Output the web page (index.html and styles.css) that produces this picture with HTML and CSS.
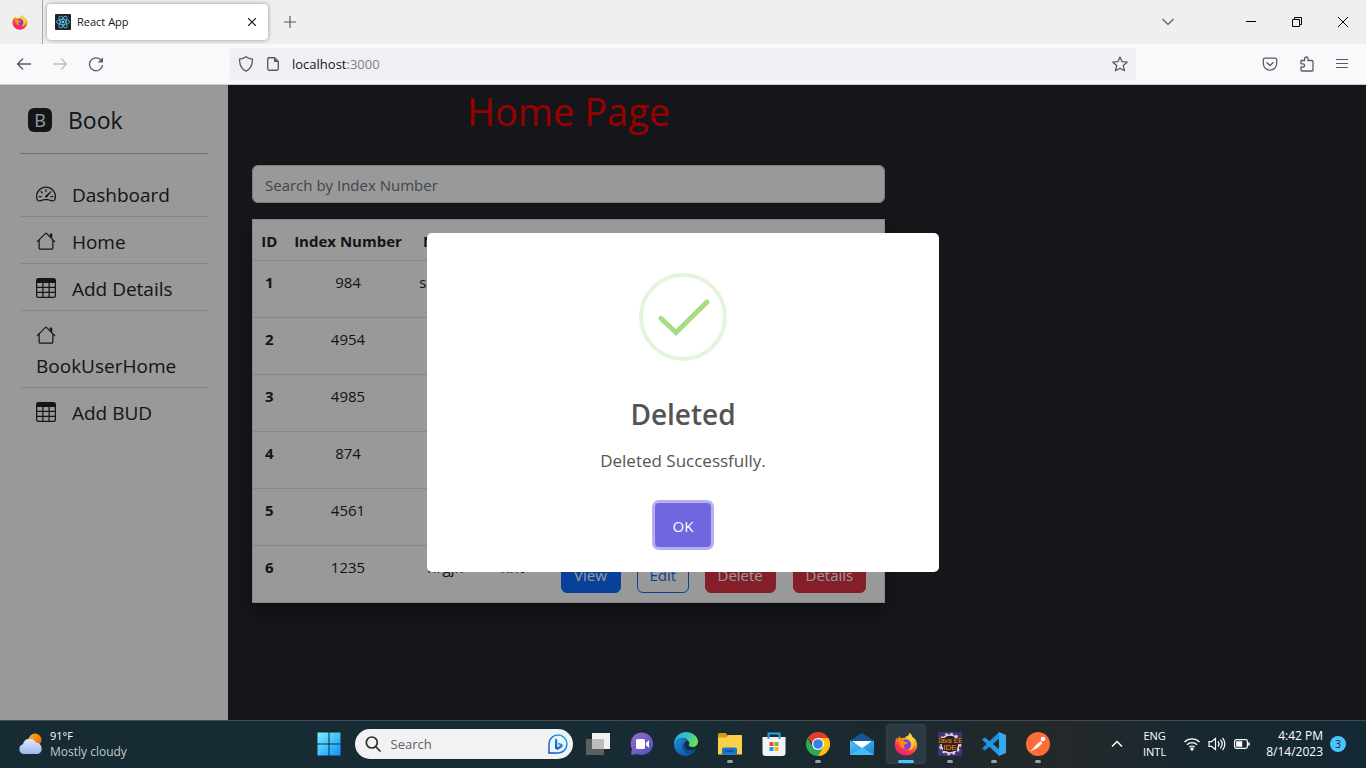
FILE: index.html
```html
<!DOCTYPE html>
<html lang="en">
<head>
<meta charset="utf-8">
<meta name="viewport" content="width=device-width, initial-scale=1">
<title>React App</title>
<link rel="stylesheet" href="styles.css">
</head>
<body>
<svg class="defs" aria-hidden="true">
  <defs>
    <linearGradient id="ff-a" x1=".8" y1="0" x2=".3" y2="1"><stop offset="0" stop-color="#fff14f"/><stop offset=".4" stop-color="#ff980e"/><stop offset=".7" stop-color="#ff3647"/><stop offset="1" stop-color="#f0188a"/></linearGradient>
    <linearGradient id="win" x1="0" y1="0" x2="1" y2="1"><stop offset="0" stop-color="#7cf0ff"/><stop offset="1" stop-color="#0a94fb"/></linearGradient>
    <linearGradient id="sun" x1="0" y1="0" x2="1" y2="1"><stop offset="0" stop-color="#fcb91c"/><stop offset="1" stop-color="#ea5a0c"/></linearGradient>
    <linearGradient id="cloud" x1="0" y1="0" x2="0" y2="1"><stop offset="0" stop-color="#dfe9fc"/><stop offset="1" stop-color="#9db9ee"/></linearGradient>
    <linearGradient id="bing" x1="0" y1="1" x2="1" y2="0"><stop offset="0" stop-color="#1b48c8"/><stop offset="1" stop-color="#28b4ea"/></linearGradient>
    <linearGradient id="chat" x1="0" y1="0" x2="1" y2="1"><stop offset="0" stop-color="#9a6cc4"/><stop offset="1" stop-color="#4c52c6"/></linearGradient>
    <linearGradient id="edge-a" x1="0" y1=".2" x2="1" y2=".4"><stop offset="0" stop-color="#2aa9e6"/><stop offset=".6" stop-color="#36c5b6"/><stop offset="1" stop-color="#6fe04e"/></linearGradient>
    <linearGradient id="edge-b" x1="0" y1="0" x2="1" y2="1"><stop offset="0" stop-color="#1b8edb"/><stop offset="1" stop-color="#0b4a96"/></linearGradient>
    <linearGradient id="mail" x1="0" y1="0" x2="1" y2="1"><stop offset="0" stop-color="#4fc8f8"/><stop offset="1" stop-color="#1684dc"/></linearGradient>
    <symbol id="i-firefox" viewBox="0 0 24 24">
      <path fill="url(#ff-a)" d="M15.500 .8c1.300 1 2.300 2.400 2.800 3.900 3 1.700 5 4.900 4.900 8.600C23 19 18 23.500 12 23.500S.8 18.900.8 12.700c0-3 .8-5.500 2.400-7.500l.5 2 1.800-2.900 1.400 2.200c1.200-.6 2.300-.8 3.500-.6L12.800 3.900 14.500 3.500z"/>
      <circle cx="12" cy="12.500" r="5" fill="#7542e5"/>
      <path fill="#ff8a16" d="M4.500 7.500c3 .2 4.800.9 6 2.200l3.300.6c-.5 1.700-2.200 1.900-3.600 2.600-.8.500-.4 2.300 1.500 3.200-3.800 1.400-7-1.100-7.200-8.600z"/>
      <path fill="#ffd43b" d="M14.800 3.500c3.300 1.700 5.600 4.800 5.400 9-.8 4-3.500 5.700-6.400 6 3-2 4.200-4.500 3.400-7.800C16.400 8.500 14.500 7 13 5.900z"/>
    </symbol>
    <symbol id="i-house" viewBox="0 0 16 16" fill="currentColor">
      <path d="M2 13.500V7h1v6.500a.5.5 0 0 0 .5.5h9a.5.5 0 0 0 .5-.5V7h1v6.500a1.500 1.500 0 0 1-1.500 1.500h-9A1.500 1.500 0 0 1 2 13.500zm11-11V6l-2-2V2.500a.5.5 0 0 1 .5-.5h1a.5.5 0 0 1 .5.500z"/>
      <path d="M7.293 1.500a1 1 0 0 1 1.414 0l6.647 6.646a.5.5 0 0 1-.708.708L8 2.207 1.354 8.854a.5.5 0 1 1-.708-.708z"/>
    </symbol>
    <symbol id="i-table" viewBox="0 0 16 16" fill="currentColor">
      <path d="M0 2a2 2 0 0 1 2-2h12a2 2 0 0 1 2 2v12a2 2 0 0 1-2 2H2a2 2 0 0 1-2-2V2zm15 2h-4v3h4V4zm0 4h-4v3h4V8zm0 4h-4v3h3a1 1 0 0 0 1-1v-2zm-5 3v-3H6v3h4zm-5 0v-3H1v2a1 1 0 0 0 1 1h3zm-4-4h4V8H1v3zm0-4h4V4H1v3zm5-3v3h4V4H6zm4 4H6v3h4V8z"/>
    </symbol>
    <symbol id="i-speed" viewBox="0 0 16 16" fill="currentColor">
      <path d="M8 4a.5.5 0 0 1 .5.5V6a.5.5 0 0 1-1 0V4.500A.5.5 0 0 1 8 4zM3.732 5.732a.5.5 0 0 1 .707 0l.915.914a.5.5 0 1 1-.708.708l-.914-.915a.5.5 0 0 1 0-.707zM2 10a.5.5 0 0 1 .5-.5h1.586a.5.5 0 0 1 0 1H2.500A.5.5 0 0 1 2 10zm9.500 0a.5.5 0 0 1 .5-.5h1.500a.5.5 0 0 1 0 1H12a.5.5 0 0 1-.5-.5zm.754-4.246a.389.389 0 0 0-.527-.02L7.547 9.310a.91.91 0 1 0 1.302 1.258l3.434-4.297a.389.389 0 0 0-.029-.518z"/>
      <path fill-rule="evenodd" d="M0 10a8 8 0 1 1 15.547 2.661c-.442 1.253-1.845 1.602-2.932 1.250C11.309 13.488 9.475 13 8 13c-1.474 0-3.310.488-4.615.911-1.087.352-2.490.003-2.932-1.250A7.988 7.988 0 0 1 0 10zm8-7a7 7 0 0 0-6.603 9.329c.203.575.923.876 1.680.630C4.397 12.533 6.358 12 8 12s3.604.532 4.923.960c.757.245 1.477-.056 1.680-.631A7 7 0 0 0 8 3z"/>
    </symbol>
  </defs>
</svg>

<header class="tabs">
  <button class="pinned" aria-label="Firefox View"><svg width="16" height="16"><use href="#i-firefox"/></svg></button>
  <div class="tab">
    <svg width="16" height="16" viewBox="0 0 16 16"><rect width="16" height="16" rx="1" fill="#20232a"/><g fill="none" stroke="#53b9d6" stroke-width=".9"><ellipse cx="8" cy="8" rx="6.500" ry="2.600"/><ellipse cx="8" cy="8" rx="6.500" ry="2.600" transform="rotate(60 8 8)"/><ellipse cx="8" cy="8" rx="6.500" ry="2.600" transform="rotate(120 8 8)"/></g><circle cx="8" cy="8" r="1.300" fill="#61dafb"/></svg>
    <span class="tab-title">React App</span>
    <button class="tab-close" aria-label="Close tab"><svg width="8" height="8" viewBox="0 0 8 8"><path d="M0 0l8 8M8 0L0 8" stroke="#15141a" stroke-width="1.200"/></svg></button>
  </div>
  <button class="new-tab" aria-label="New tab"><svg width="12" height="12" viewBox="0 0 12 12"><path d="M6 0v12M0 6h12" stroke="#5b5b66" stroke-width="1.200"/></svg></button>
  <div class="window-buttons">
    <button class="list-tabs" aria-label="List all tabs"><svg width="12" height="8" viewBox="0 0 12 8"><path d="M.5 1L6 6.500 11.500 1" fill="none" stroke="#5b5b66" stroke-width="1.200"/></svg></button>
    <button aria-label="Minimize"><svg width="10" height="10" viewBox="0 0 10 10"><path d="M0 4.500h10" stroke="#000"/></svg></button>
    <button aria-label="Restore"><svg width="10" height="10" viewBox="0 0 10 10" fill="none" stroke="#000"><path d="M.5 2.500h7v7h-7zM2.500 2.500v-2h7v7h-2"/></svg></button>
    <button aria-label="Close"><svg width="10" height="10" viewBox="0 0 10 10"><path d="M0 0l10 10M10 0L0 10" stroke="#000"/></svg></button>
  </div>
</header>

<nav class="toolbar" aria-label="Browser toolbar">
  <div class="history">
    <button aria-label="Back"><svg width="16" height="16" viewBox="0 0 16 16" fill="none" stroke="#5b5b66" stroke-width="1.300"><path d="M7 2.500L1.500 8 7 13.500M1.500 8H15"/></svg></button>
    <button aria-label="Forward" disabled><svg width="16" height="16" viewBox="0 0 16 16" fill="none" stroke="#bdbdc2" stroke-width="1.300"><path d="M9 2.500L14.500 8 9 13.500M14.500 8H1"/></svg></button>
    <button aria-label="Reload"><svg width="16" height="16" viewBox="0 0 16 16" fill="none" stroke="#5b5b66" stroke-width="1.300"><path d="M12.700 3.800A6.500 6.500 0 1 0 14.500 9"/><path d="M15 1.200v5.300H9.700z" fill="#5b5b66" stroke="none"/></svg></button>
  </div>
  <div class="urlbar">
    <svg width="16" height="16" viewBox="0 0 16 16" fill="none" stroke="#5b5b66" stroke-width="1.300"><path d="M8 .8c2 1.500 4.300 2.200 6.500 2.400 0 5.300-1.500 9.800-6.500 12-5-2.200-6.500-6.700-6.500-12C3.700 3 6 2.300 8 .8z"/></svg>
    <svg width="16" height="16" viewBox="0 0 16 16" fill="none" stroke="#5b5b66" stroke-width="1.400"><path d="M9.500 1.700H4A1.500 1.500 0 0 0 2.700 3v10A1.500 1.500 0 0 0 4 14.300h8a1.500 1.500 0 0 0 1.300-1.300V5.500z"/><path d="M9 1.500v4.500h4.500z" fill="#5b5b66" stroke="none"/></svg>
    <div class="url" role="textbox" contenteditable="true" spellcheck="false" aria-label="Address">localhost<span class="port">:3000</span></div>
    <button aria-label="Bookmark this page"><svg width="16" height="16" viewBox="0 0 16 16" fill="none" stroke="#5b5b66" stroke-width="1.300" stroke-linejoin="round"><path d="M8 1l2.100 4.700 5.100.5-3.900 3.400 1.200 5.200L8 12.200l-4.500 2.600 1.200-5.200L.8 6.200l5.100-.5z"/></svg></button>
  </div>
  <div class="actions">
    <button aria-label="Save to Pocket"><svg width="16" height="16" viewBox="0 0 16 16" fill="none" stroke="#5b5b66" stroke-width="1.300"><path d="M3 2.200h10a1.700 1.700 0 0 1 1.700 1.700v3.600a6.700 6.700 0 0 1-13.400 0V3.900A1.700 1.700 0 0 1 3 2.200z"/><path d="M4.500 6.200L8 9.500l3.500-3.300"/></svg></button>
    <button aria-label="Extensions"><svg width="16" height="16" viewBox="0 0 16 16" fill="none" stroke="#5b5b66" stroke-width="1.300" stroke-linejoin="round"><path d="M2 4.500h3.600V2.700a1.700 1.700 0 0 1 3.400 0v1.800h4a1 1 0 0 1 1 1V14a1 1 0 0 1-1 1H3a1 1 0 0 1-1-1v-3h2a1.600 1.600 0 0 0 0-3.200H2z"/></svg></button>
    <button aria-label="Open application menu"><svg width="12" height="12" viewBox="0 0 12 12"><path d="M0 1.500h12M0 5.500h12M0 9.500h12" stroke="#5b5b66"/></svg></button>
  </div>
</nav>

<div class="page">
  <aside class="sidebar">
    <a class="brand" href="#"><span class="brand-mark" aria-hidden="true">B</span><span>Book</span></a>
    <hr class="rule">
    <ul class="menu">
      <li><a href="#"><svg class="menu-icon"><use href="#i-speed"/></svg> Dashboard</a></li>
      <li><a href="#"><svg class="menu-icon"><use href="#i-house"/></svg> Home</a></li>
      <li><a href="#"><svg class="menu-icon"><use href="#i-table"/></svg> Add Details</a></li>
      <li><a href="#"><svg class="menu-icon"><use href="#i-house"/></svg> BookUserHome</a></li>
      <li><a href="#"><svg class="menu-icon"><use href="#i-table"/></svg> Add BUD</a></li>
    </ul>
  </aside>

  <main class="content">
    <h1 class="page-title">Home Page</h1>
    <input class="search" type="text" placeholder="Search by Index Number" aria-label="Search by Index Number">
    <table class="records">
      <colgroup><col class="c-id"><col class="c-index"><col class="c-name"><col class="c-short"><col class="c-view"><col class="c-edit"><col class="c-delete"><col></colgroup>
      <thead><tr><th>ID</th><th>Index Number</th><th>Name</th><th></th><th></th><th></th><th></th><th></th></tr></thead>
      <tbody>
        <tr><th>1</th><td>984</td><td>sandun</td><td></td><td></td><td></td><td></td><td></td></tr>
        <tr><th>2</th><td>4954</td><td></td><td></td><td></td><td></td><td></td><td></td></tr>
        <tr><th>3</th><td>4985</td><td></td><td></td><td></td><td></td><td></td><td></td></tr>
        <tr><th>4</th><td>874</td><td></td><td></td><td></td><td></td><td></td><td></td></tr>
        <tr><th>5</th><td>4561</td><td></td><td></td><td></td><td></td><td></td><td></td></tr>
        <tr><th>6</th><td>1235</td><td>hrgjn</td><td>hnt</td><td><button class="btn view">View</button></td><td><button class="btn edit">Edit</button></td><td><button class="btn danger">Delete</button></td><td><button class="btn danger">Details</button></td></tr>
      </tbody>
    </table>
  </main>

  <div class="backdrop">
    <div class="modal" role="dialog" aria-modal="true" aria-labelledby="modal-title">
      <svg class="modal-icon" width="88" height="88" viewBox="0 0 88 88" fill="none"><circle cx="44" cy="44" r="42" stroke="#e4f5db" stroke-width="4"/><path d="M22 45.500L37 59.500 68 29" stroke="#a5dc86" stroke-width="5" stroke-linecap="round"/></svg>
      <h2 class="modal-title" id="modal-title">Deleted</h2>
      <p class="modal-text">Deleted Successfully.</p>
      <button class="ok">OK</button>
    </div>
  </div>
</div>

<footer class="taskbar">
  <button class="weather">
    <svg width="26" height="22" viewBox="0 0 26 22"><circle cx="17" cy="7" r="6.500" fill="url(#sun)"/><path d="M5.500 21a5 5 0 0 1-.6-9.700A7 7 0 0 1 18 9.500a6 6 0 0 1 2 11.500z" fill="url(#cloud)"/></svg>
    <span class="weather-text"><span class="degrees">91°F</span><span class="sky">Mostly cloudy</span></span>
  </button>

  <div class="apps">
    <button class="app" aria-label="Start"><svg width="24" height="24" viewBox="0 0 24 24"><path fill="url(#win)" d="M.5.5h11v11H.500zM12.500.5h11v11h-11zM.5 12.500h11v11H.500zM12.500 12.500h11v11h-11z"/></svg></button>
    <label class="task-search">
      <svg width="16" height="16" viewBox="0 0 16 16" fill="none" stroke="#2b2b2b" stroke-width="1.700" stroke-linecap="round"><circle cx="6.800" cy="6.500" r="5.500"/><path d="M11 11l4 4"/></svg>
      <input type="text" placeholder="Search" aria-label="Search">
      <svg width="20" height="20" viewBox="0 0 20 20"><path d="M1 19V10a9 9 0 1 1 9 9z" fill="#eaf6fd" stroke="url(#bing)" stroke-width="1.500"/><path d="M7 4.500l2.300.9v7.800l3-1.700-1.500-.8-.9-2.300 4.700 1.800v2.700l-5.300 3.100L7 14.500z" fill="url(#bing)"/></svg>
    </label>
    <button class="app" aria-label="Task view"><svg width="24" height="24" viewBox="0 0 24 24"><path d="M6 1h18v16H6z" fill="#f1f1f1"/><path d="M0 7h18v16H0z" fill="#5e5e5e"/><path d="M6 7h12v10H6z" fill="#bdbdbd"/></svg></button>
    <button class="app" aria-label="Chat"><svg width="24" height="24" viewBox="0 0 24 24"><path d="M1 23l1-6A11.200 11.200 0 1 1 7.500 22z" fill="url(#chat)"/><rect x="6" y="7" width="9" height="10" rx="1.500" fill="#fff"/><path d="M16 11l3-3v8l-3-3z" fill="#fff"/></svg></button>
    <button class="app" aria-label="Edge"><svg width="24" height="24" viewBox="0 0 24 24"><path fill="url(#edge-b)" d="M0 12C.5 5 9 4 13 9c-3 1-3.500 4-2 6.500 2 3.500 7 3.500 11 1.500-2 4-6 7-10.500 7C5 24 0 18.500 0 12z"/><path fill="#0c4e94" d="M8.500 13c-1 5 3.500 9 8 8.800 3-1.300 4.500-3 5.500-4.800-5 2.500-10 1.500-11.500-2.500-.6-1.500-.5-3 .5-4.500-1.300.5-2.200 1.500-2.500 3z"/><path fill="url(#edge-a)" d="M0 12C0 5 5.500 0 12 0s12 4.500 12 9.500c0 3.500-2.500 5.500-5.500 5.500-2.500 0-4-1-3.700-2 .8-1 .7-2.500-.2-3.700C12.500 6.500 9.500 5.500 6.500 6 3.500 6.500 1 8.500 0 12z"/></svg></button>
    <button class="app running" aria-label="File Explorer"><svg width="24" height="24" viewBox="0 0 24 24"><path d="M0 2.500A1.500 1.500 0 0 1 1.500 1h6l2.500 2.500V9H0z" fill="#d99a10"/><path d="M0 5.500h8.500L10.500 3H23a1 1 0 0 1 1 1v18.500H0z" fill="#fccf49"/><path d="M4 22.500v-5A2 2 0 0 1 6 15.500h11a2 2 0 0 1 2 2v5z" fill="#1677d0"/><path d="M7 19h9" stroke="#0b4d91" stroke-width="1.500"/></svg></button>
    <button class="app" aria-label="Microsoft Store"><svg width="24" height="24" viewBox="0 0 24 24"><path d="M.5 5h23v16a3 3 0 0 1-3 3h-17a3 3 0 0 1-3-3z" fill="#f4f4f4"/><path d="M6.500 7V1.500h11V7" fill="none" stroke="#24a9e2" stroke-width="2"/><path d="M7.500 10h4v4h-4z" fill="#e8502a"/><path d="M12.500 10h4v4h-4z" fill="#7db72f"/><path d="M7.500 15h4v4h-4z" fill="#1c9be6"/><path d="M12.500 15h4v4h-4z" fill="#f8b51d"/></svg></button>
    <button class="app running" aria-label="Chrome"><svg width="24" height="24" viewBox="0 0 24 24"><path fill="#e33b2e" d="M1.600 6A12 12 0 0 1 22.400 6H12v12z"/><path fill="#2da94f" d="M1.600 6A12 12 0 0 0 12 24l5.200-9L12 12 6.800 15z"/><path fill="#fdc40e" d="M22.400 6A12 12 0 0 1 12 24l5.200-9L12 6z"/><circle cx="12" cy="12" r="6" fill="#fff"/><circle cx="12" cy="12" r="4.800" fill="#3b7ded"/></svg></button>
    <button class="app" aria-label="Mail"><svg width="24" height="24" viewBox="0 0 24 24"><path d="M0 8.500L12 1l12 7.500v5H0z" fill="#0f5796"/><path d="M2 9h20l-10 8z" fill="#fff"/><path d="M0 8.500L12 16l12-7.500V23H0z" fill="url(#mail)"/><path d="M0 23l12-7.500L24 23z" fill="#45bdf3"/></svg></button>
    <button class="app running active" aria-label="Firefox"><svg width="24" height="24"><use href="#i-firefox"/></svg></button>
    <button class="app running" aria-label="Eclipse Java EE IDE"><svg width="24" height="24" viewBox="0 0 24 24"><rect width="24" height="24" rx="1" fill="#45307b"/><circle cx="12" cy="12" r="9" fill="#26201d" stroke="#d9d9d9" stroke-width="1.500"/><circle cx="12" cy="12" r="10.300" fill="none" stroke="#d9d9d9" stroke-width="2" stroke-dasharray="2.500 2.900"/><rect y="6" width="24" height="6" fill="#30231d"/><rect x="5" y="11" width="14" height="8" fill="#30231d"/><text class="java" x="12" y="11" text-anchor="middle">Java EE</text><text class="ide" x="12" y="18" text-anchor="middle">IDE</text></svg></button>
    <button class="app running" aria-label="Visual Studio Code"><svg width="24" height="24" viewBox="0 0 24 24"><path d="M17.500 6.500L3 18.500 0 16.500 17 0z" fill="#1e8ed6"/><path d="M17.500 17.500L3 5.500 0 7.500 17 24z" fill="#2499e2"/><path d="M17 0l7 3v18l-7 3z" fill="#32a9f0"/></svg></button>
    <button class="app running" aria-label="Postman"><svg width="24" height="24" viewBox="0 0 24 24"><circle cx="12" cy="12" r="12" fill="#ff6c37"/><path d="M6 18.500l3.500-5 5-4.500 2 2-4.500 4.500z" fill="#fff"/><circle cx="17" cy="7" r="2.300" fill="#fff"/><path d="M5 19l9-8" stroke="#fff"/></svg></button>
  </div>

  <div class="tray">
    <button aria-label="Show hidden icons"><svg width="12" height="8" viewBox="0 0 12 8"><path d="M1 6.500l5-5 5 5" fill="none" stroke="#fff" stroke-width="1.500"/></svg></button>
    <button class="language"><span>ENG</span><span>INTL</span></button>
    <button class="status" aria-label="Network, volume, battery">
      <svg width="16" height="14" viewBox="0 0 16 14" fill="none" stroke="#fff" stroke-width="1.300"><path d="M.5 5a10.500 10.500 0 0 1 15 0M3 7.700a7 7 0 0 1 10 0M5.400 10.200a3.700 3.700 0 0 1 5.200 0"/><circle cx="8" cy="12" r="1" fill="#fff"/></svg>
      <svg width="18" height="14" viewBox="0 0 18 14" fill="none" stroke="#fff" stroke-width="1.200"><path d="M1 4.700h2.500L7.500 1.500v11L3.500 9.300H1zM10 4.500c1.300 1.500 1.300 3.500 0 5M12.300 2.700c2.300 2.500 2.300 6 0 8.600M14.600 1c3 3.500 3 8.500 0 12"/></svg>
      <svg width="16" height="10" viewBox="0 0 16 10"><rect x=".6" y=".6" width="12.800" height="8.800" rx="1.800" fill="none" stroke="#fff" stroke-width="1.200"/><path d="M2.200 2.200h6v5.600h-6z" fill="#fff"/><path d="M15 3.200v3.600" stroke="#fff" stroke-width="1.500"/></svg>
    </button>
    <button class="clock"><span>4:42 PM</span><span>8/14/2023</span></button>
    <button class="badge" aria-label="3 notifications">3</button>
  </div>
</footer>
</body>
</html>
```

FILE: styles.css
```css
* { box-sizing: border-box; }

body {
  margin: 0;
  min-height: 100vh;
  display: flex;
  flex-direction: column;
  font-family: "Open Sans", "Noto Sans", sans-serif;
  font-size: 15px;
  line-height: 24px;
  color: #212529;
}

button {
  font: inherit;
  color: inherit;
  background: none;
  border: 0;
  padding: 0;
}

svg { display: block; flex: none; }
.defs { position: absolute; width: 0; height: 0; }

/* Browser chrome */
.tabs {
  display: flex;
  align-items: center;
  height: 44px;
  background: #efefef;
}
.pinned {
  display: flex;
  align-items: center;
  justify-content: center;
  width: 43px;
  height: 44px;
  padding-right: 3px;
  border-right: 1px solid #a8a8a8;
}
.tab {
  display: flex;
  align-items: center;
  gap: 6px;
  width: 221px;
  height: 36px;
  margin-left: 4px;
  padding: 0 8px;
  border-radius: 4px;
  background: #fff;
  box-shadow: 0 0 4px rgba(0, 0, 0, .4);
}
.tab-title { flex: 1; font-size: 11px; color: #15141a; }
.tab-close { padding: 4px; }
.new-tab { margin-left: 16px; }
.window-buttons { display: flex; margin-left: auto; }
.window-buttons button {
  display: flex;
  justify-content: center;
  align-items: center;
  width: 46px;
  height: 44px;
}
.window-buttons .list-tabs { width: 40px; margin-right: 40px; }

.toolbar {
  display: grid;
  grid-template-columns: 230px 1fr 230px;
  align-items: center;
  height: 41px;
  background: #f9f9fb;
  border-bottom: 1px solid #ccc;
}
.history { display: flex; gap: 20px; padding-left: 16px; }
.urlbar {
  display: flex;
  align-items: center;
  gap: 11px;
  height: 32px;
  padding: 0 8px;
  border-radius: 4px;
  background: #f0f0f4;
}
.url { flex: 1; font-size: 13px; color: #15141a; outline: 0; }
.port { color: #7f7f88; }
.actions {
  display: flex;
  justify-content: flex-end;
  align-items: center;
  gap: 21px;
  padding-right: 18px;
}

/* Application */
.page {
  position: relative;
  flex: 1;
  display: flex;
  background: #23262b;
}
.sidebar {
  width: 228px;
  padding: 16px 20px;
  background: #fff;
}
.brand {
  display: flex;
  align-items: center;
  gap: 16px;
  padding: 0 8px;
  font-size: 23px;
  line-height: 38px;
  color: inherit;
  text-decoration: none;
}
.brand-mark {
  width: 24px;
  height: 24px;
  border-radius: 6px;
  background: #212529;
  color: #fff;
  font-size: 18px;
  line-height: 24px;
  text-align: center;
}
.rule { margin: 14px 0 16px; border: 0; border-top: 1px solid #bcbdbf; }
.menu { margin: 0; padding: 0; list-style: none; }
.menu li { border-bottom: 1px solid #dfdfdf; }
.menu li:last-child { border: 0; }
.menu a {
  display: block;
  padding: 10px 16px 6px;
  font-size: 19px;
  line-height: 30px;
  color: inherit;
  text-decoration: none;
}
.menu-icon {
  display: inline-block;
  width: 20px;
  height: 20px;
  margin-right: 11px;
  vertical-align: -2px;
}
.content { width: 50%; padding: 0 26px 24px 24px; }
.page-title {
  margin: 0;
  padding: 2px 0 30px;
  font-size: 38px;
  font-weight: 400;
  line-height: 48px;
  text-align: center;
  color: #f00;
}
.search {
  display: block;
  width: 100%;
  height: 38px;
  margin-bottom: 16px;
  padding: 7px 12px 5px;
  border: 1px solid #ced4da;
  border-radius: 6px;
  background: #fff;
  font: inherit;
}
.search::placeholder { color: #6c757d; opacity: 1; }
.records {
  width: 100%;
  table-layout: fixed;
  border-collapse: collapse;
  border: 1px solid #dee2e6;
  background: #fff;
  text-align: center;
  box-shadow: 0 8px 16px rgba(0, 0, 0, .35);
}
.records th, .records td {
  padding: 9px 0 7px;
  border-bottom: 1px solid #dee2e6;
  vertical-align: top;
  white-space: nowrap;
}
.records tbody tr { height: 57px; }
.records td:nth-child(n+5) {
  padding: 0 8px;
  vertical-align: middle;
  text-align: left;
}
.records td:nth-child(5) { padding-left: 16px; }
.c-id { width: 33px; }
.c-index { width: 125px; }
.c-name { width: 70px; }
.c-short { width: 64px; }
.c-view { width: 84px; }
.c-edit { width: 68px; }
.c-delete { width: 88px; }
.btn {
  height: 38px;
  padding: 1px 12px 0;
  border: 1px solid;
  border-radius: 6px;
  vertical-align: middle;
  color: #fff;
}
.view { width: 60px; background: #0d6efd; border-color: #0d6efd; }
.edit { color: #0d6efd; }
.danger { background: #dc3545; border-color: #dc3545; }

.backdrop {
  position: absolute;
  inset: 0;
  display: flex;
  align-items: center;
  justify-content: center;
  background: rgba(0, 0, 0, .4);
}
.modal {
  display: flex;
  flex-direction: column;
  align-items: center;
  width: 512px;
  padding: 40px 20px 25px;
  border-radius: 5px;
  background: #fff;
  color: #545454;
}
.modal-title { margin: 35px 0 14px; font-size: 28px; font-weight: 600; line-height: 36px; }
.modal-text { margin: 0 0 27px; font-size: 17px; line-height: 30px; }
.ok {
  width: 56px;
  height: 44px;
  padding-top: 1px;
  border-radius: 4px;
  background: #7066e0;
  box-shadow: 0 0 0 3px rgba(112, 102, 224, .5);
  color: #fff;
}

/* Taskbar */
.taskbar {
  display: grid;
  grid-template-columns: 1fr auto 1fr;
  align-items: center;
  height: 48px;
  padding-bottom: 1px;
  border-top: 1px solid #3e4b51;
  background: linear-gradient(90deg, #172b35 0 45%, #1b292e 65%, #24292a 78%, #172831 88%, #152934);
  color: #fff;
  font-size: 12px;
  line-height: 16px;
}
.weather { display: flex; align-items: center; gap: 6px; padding-left: 18px; text-align: left; }
.weather-text, .language, .clock { display: flex; flex-direction: column; }
.degrees { font-size: 11px; }
.sky { color: #c3c9cc; }
.apps { display: flex; align-items: center; }
.app {
  position: relative;
  display: flex;
  align-items: center;
  justify-content: center;
  width: 40px;
  height: 40px;
  margin: 0 2px;
  border-radius: 4px;
}
.active { background: #2b3a43; box-shadow: inset 0 0 0 1px #34434b; }
.running::after {
  content: "";
  position: absolute;
  bottom: 1px;
  width: 6px;
  height: 3px;
  border-radius: 2px;
  background: #9aa1a4;
}
.active::after { width: 16px; background: #4cc2ff; }
.java { font: 7px "Liberation Sans", sans-serif; fill: #f58a25; }
.ide { font: 8px "Liberation Sans", sans-serif; fill: #f58a25; }
.task-search {
  display: flex;
  align-items: center;
  gap: 10px;
  width: 218px;
  height: 30px;
  margin: 0 3px 0 4px;
  padding: 0 5px 0 10px;
  border-radius: 15px;
  background: #f1f2f4;
}
.task-search input {
  flex: 1;
  min-width: 0;
  padding: 0;
  border: 0;
  background: none;
  font: inherit;
  font-size: 13px;
}
.task-search input::placeholder { color: #5f6062; opacity: 1; }
.tray { display: flex; align-items: center; justify-content: flex-end; padding-right: 20px; }
.language { align-items: center; margin: 0 18px 0 20px; font-size: 11px; }
.status { display: flex; align-items: center; gap: 8px; }
.clock { align-items: flex-end; margin: 0 7px 0 16px; font-size: 12px; }
.badge {
  width: 16px;
  height: 16px;
  border-radius: 8px;
  background: #4cc2ff;
  color: #102733;
  font-size: 10px;
  line-height: 16px;
}
```
